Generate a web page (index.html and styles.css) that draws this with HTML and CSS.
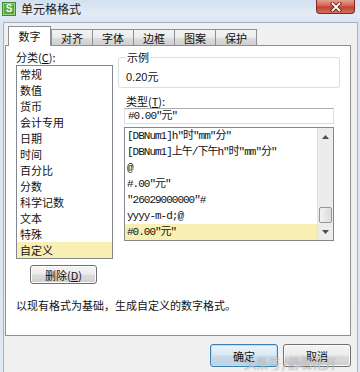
FILE: index.html
```html
<!DOCTYPE html>
<html lang="zh-CN">
<head>
<meta charset="utf-8">
<title>单元格格式</title>
<link rel="stylesheet" href="styles.css">
</head>
<body>
<div class="window">
  <div class="titlebar">
    <div class="app-icon"><span>S</span></div>
    <div class="title">单元格格式</div>
    <div class="close">
      <svg width="14" height="10" viewBox="0 0 14 10"><path d="M3.5 1.5 L10.5 8.5 M10.5 1.5 L3.5 8.5" stroke="#5a1d1d" stroke-width="3.4" stroke-linecap="square"/><path d="M3.5 1.5 L10.5 8.5 M10.5 1.5 L3.5 8.5" stroke="#ffffff" stroke-width="1.8" stroke-linecap="square"/></svg>
    </div>
  </div>
  <div class="client">
    <div class="tabs">
      <div class="tab active">数字</div>
      <div class="tab">对齐</div>
      <div class="tab">字体</div>
      <div class="tab">边框</div>
      <div class="tab">图案</div>
      <div class="tab">保护</div>
    </div>
    <div class="panel">
      <div class="panel-top">
        <div class="left-col">
          <div class="label">分类(<u>C</u>):</div>
          <div class="catlist">
            <div class="item">常规</div>
            <div class="item">数值</div>
            <div class="item">货币</div>
            <div class="item">会计专用</div>
            <div class="item">日期</div>
            <div class="item">时间</div>
            <div class="item">百分比</div>
            <div class="item">分数</div>
            <div class="item">科学记数</div>
            <div class="item">文本</div>
            <div class="item">特殊</div>
            <div class="item selected">自定义</div>
          </div>
          <div class="btn btn-delete">删除(<u>D</u>)</div>
        </div>
        <div class="right-col">
          <fieldset class="sample">
            <legend>示例</legend>
            <div class="sample-value">0.20元</div>
          </fieldset>
          <div class="label type-label">类型(<u>T</u>):</div>
          <div class="type-input mono">#0.00"元"</div>
          <div class="typelist">
            <div class="rows mono">
              <div class="row">[DBNum1]h"时"mm"分"</div>
              <div class="row">[DBNum1]上午/下午h"时"mm"分"</div>
              <div class="row">@</div>
              <div class="row">#.00"元"</div>
              <div class="row">"26029000000"#</div>
              <div class="row">yyyy-m-d;@</div>
              <div class="row selected">#0.00"元"</div>
            </div>
            <div class="scrollbar">
              <div class="sb-btn"><svg width="7" height="4" viewBox="0 0 7 4"><path d="M0 4 L3.5 0 L7 4 Z" fill="#4d4d4d"/></svg></div>
              <div class="sb-track"></div>
              <div class="sb-thumb"></div>
              <div class="sb-btn"><svg width="7" height="4" viewBox="0 0 7 4"><path d="M0 0 L3.5 4 L7 0 Z" fill="#4d4d4d"/></svg></div>
            </div>
          </div>
        </div>
      </div>
      <div class="desc">以现有格式为基础，生成自定义的数字格式。</div>
    </div>
    <div class="buttons">
      <div class="btn btn-main default">确定</div>
      <div class="btn btn-main">取消</div>
      <div class="watermark">头条号 / 静看花开</div>
    </div>
  </div>
</div>
</body>
</html>
```

FILE: styles.css
```css
* { box-sizing: border-box; }
html, body { margin: 0; padding: 0; }
body {
  width: 360px;
  height: 372px;
  overflow: hidden;
  font-family: "Noto Sans CJK SC", "Liberation Sans", sans-serif;
  font-size: 11px;
  color: #111;
}
.window {
  width: 360px;
  height: 372px;
  display: flex;
  flex-direction: column;
  background: linear-gradient(180deg, #d3e0f0 0px, #e3ebf5 14px, #dae5f2 22px, #dfe8f3 100%);
}
.titlebar {
  height: 22px;
  display: flex;
  align-items: flex-start;
  position: relative;
  flex: none;
}
.app-icon {
  width: 14px;
  height: 14px;
  margin: 2px 0 0 2px;
  background: #56a83c;
  border: 1px solid #3f8a2c;
  box-shadow: inset 0 0 0 1px #9bd486;
  display: flex;
  align-items: center;
  justify-content: center;
}
.app-icon span {
  font-family: "Liberation Sans", sans-serif;
  font-weight: bold;
  font-size: 10px;
  line-height: 10px;
  color: #f3fbef;
}
.title {
  margin: 1px 0 0 5px;
  font-size: 12px;
  line-height: 16px;
  color: #1a1a1a;
}
.close {
  position: absolute;
  left: 316px;
  top: 0;
  width: 39px;
  height: 14px;
  border: 1px solid #7a2a2a;
  border-top: none;
  border-radius: 0 0 4px 4px;
  background: linear-gradient(180deg, #e6a08f 0%, #d2604e 45%, #c2412f 55%, #d2735f 100%);
  display: flex;
  align-items: center;
  justify-content: center;
}
.client {
  flex: 1;
  margin: 0 2px 0 3px;
  border: 1px solid #a3b1c4;
  border-bottom: none;
  background: #f0f0f0;
  display: flex;
  flex-direction: column;
}
.tabs {
  height: 22px;
  padding: 3px 0 0 4px;
  display: flex;
  align-items: flex-end;
  flex: none;
}
.tab {
  width: 42px;
  height: 16px;
  margin-left: -1px;
  border: 1px solid #8e9096;
  border-bottom: none;
  background: linear-gradient(180deg, #f3f3f3 0%, #ebebeb 50%, #dddddd 51%, #cfcfcf 100%);
  display: flex;
  align-items: center;
  justify-content: center;
  line-height: 14px;
  color: #111;
}
.tab.active {
  width: 43px;
  height: 20px;
  margin-left: 0;
  margin-right: 0;
  margin-bottom: -1px;
  background: #ffffff;
  position: relative;
  z-index: 1;
  padding-bottom: 1px;
}
.tab.active + .tab { margin-left: 0; }
.panel {
  height: 291px;
  margin: 0 6px 0 1px;
  border: 1px solid #8e9096;
  background: #ffffff;
  padding: 4px 9px 0 10px;
  flex: none;
}
.panel-top {
  display: flex;
  gap: 5px;
  align-items: flex-start;
}
.left-col {
  width: 97px;
  flex: none;
}
.label {
  line-height: 14px;
  height: 14px;
  margin-bottom: 1px;
}
.catlist {
  height: 194px;
  border: 1px solid #828790;
  background: #fff;
}
.item {
  height: 16px;
  line-height: 16px;
  padding-left: 3px;
  white-space: nowrap;
}
.selected {
  background: #f7efb3;
}
.btn {
  display: flex;
  align-items: center;
  justify-content: center;
  border: 1px solid #707070;
  border-radius: 3px;
  background: linear-gradient(180deg, #f4f4f4 0%, #ececec 48%, #dcdcdc 52%, #cfcfcf 100%);
  box-shadow: inset 0 0 0 1px #fcfcfc;
  color: #111;
}
.btn-delete {
  width: 67px;
  height: 19px;
  margin: 6px 0 0 14px;
  line-height: 14px;
}
.right-col {
  width: 222px;
  flex: none;
}
.sample {
  margin: 1px 0 0 0;
  padding: 0 7px 3px 7px;
  border: 1px solid #d5dfe5;
  border-radius: 3px;
}
.sample legend {
  padding: 0 1px;
  line-height: 12px;
  font-size: 11px;
}
.sample-value {
  margin-top: 7px;
  line-height: 14px;
  font-family: "Liberation Sans", "Noto Sans CJK SC", sans-serif;
}
.type-label {
  margin: 7px 0 0 0;
  padding-left: 8px;
  line-height: 13px;
  height: 13px;
}
.mono {
  font-family: "Liberation Mono", "Noto Sans CJK SC", monospace;
  letter-spacing: -1px;
}
.type-input {
  margin: 0 6px;
  height: 16px;
  border: 1px solid #dbdfe6;
  border-top-color: #abadb3;
  padding-left: 3px;
  line-height: 14px;
  white-space: nowrap;
}
.typelist {
  margin: 3px 6px 0 6px;
  height: 114px;
  border: 1px solid #828790;
  display: flex;
}
.rows {
  flex: 1;
}
.row {
  height: 16px;
  line-height: 16px;
  padding-left: 2px;
  white-space: nowrap;
}
.scrollbar {
  width: 16px;
  flex: none;
  display: flex;
  flex-direction: column;
  background: #ececec;
  border-left: 1px solid #e2e2e2;
}
.sb-btn {
  height: 17px;
  flex: none;
  display: flex;
  align-items: center;
  justify-content: center;
}
.sb-track {
  flex: 1;
}
.sb-thumb {
  height: 16px;
  flex: none;
  margin: 0 1px;
  border: 1px solid #979797;
  border-radius: 2px;
  background: linear-gradient(90deg, #f3f3f3, #dcdcdc);
}
.desc {
  margin-top: 14px;
  line-height: 14px;
  white-space: nowrap;
}
.buttons {
  display: flex;
  justify-content: flex-end;
  gap: 5px;
  padding-right: 6px;
  margin-top: 8px;
  position: relative;
}
.btn-main {
  width: 68px;
  height: 23px;
  line-height: 14px;
}
.btn-main.default {
  border-color: #3c7fb1;
  background: linear-gradient(180deg, #eaf3fa 0%, #dbe9f4 48%, #c8dbea 52%, #bcd3e6 100%);
  box-shadow: inset 0 0 0 1px #b8e0f7;
}
.watermark {
  position: absolute;
  left: 240px;
  top: 12px;
  font-size: 13px;
  line-height: 14px;
  color: rgba(255, 255, 255, 0.6);
  text-shadow: 0 0 1px rgba(60, 60, 60, 0.6);
  white-space: nowrap;
  letter-spacing: -1px;
}
```
